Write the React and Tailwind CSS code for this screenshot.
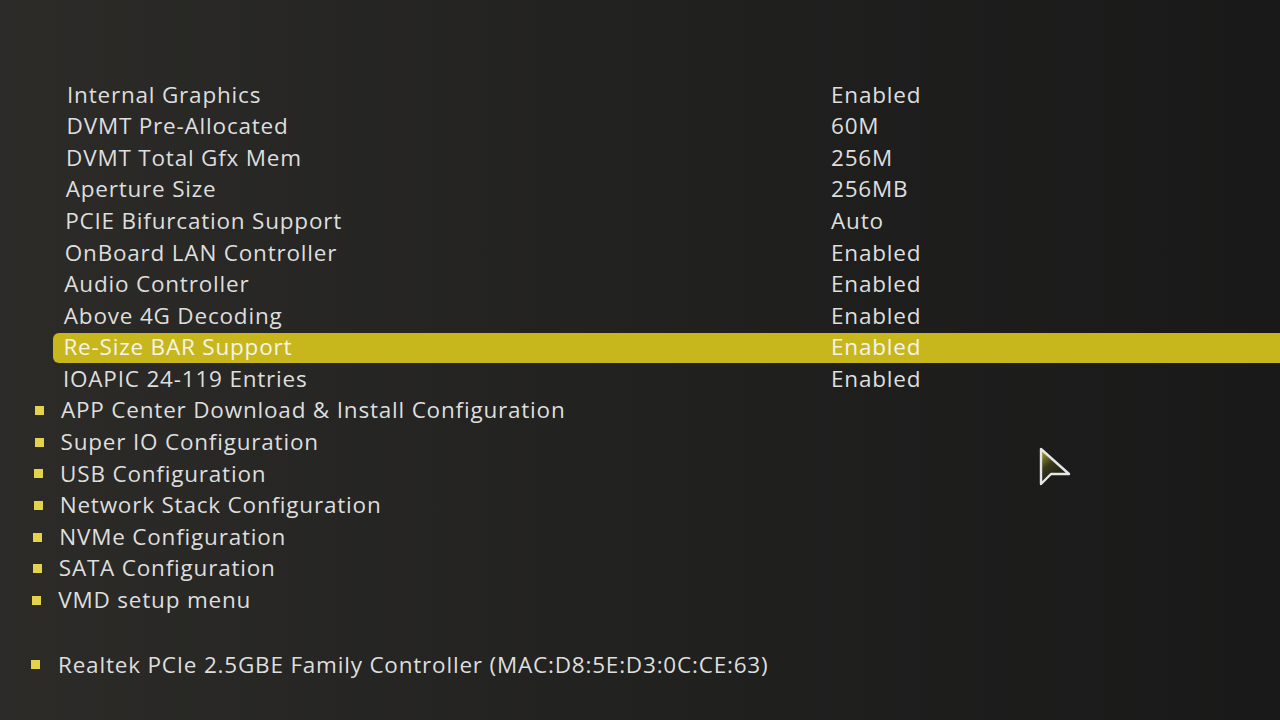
import React from "react";

const settings = [
  ["Internal Graphics", "Enabled"],
  ["DVMT Pre-Allocated", "60M"],
  ["DVMT Total Gfx Mem", "256M"],
  ["Aperture Size", "256MB"],
  ["PCIE Bifurcation Support", "Auto"],
  ["OnBoard LAN Controller", "Enabled"],
  ["Audio Controller", "Enabled"],
  ["Above 4G Decoding", "Enabled"],
  ["Re-Size BAR Support", "Enabled", true],
  ["IOAPIC 24-119 Entries", "Enabled"],
];

const menus = [
  "APP Center Download & Install Configuration",
  "Super IO Configuration",
  "USB Configuration",
  "Network Stack Configuration",
  "NVMe Configuration",
  "SATA Configuration",
  "VMD setup menu",
];

function Bullet() {
  return <span className="w-[9px] h-[9px] bg-[#e3d24a] shrink-0" />;
}

function Cursor() {
  return (
    <svg className="absolute left-[1038px] top-[446px]" width="36" height="44" viewBox="0 0 36 44">
      <defs>
        <linearGradient id="cg" x1="0" y1="0" x2="0.6" y2="1">
          <stop offset="0" stopColor="#b8b23a" />
          <stop offset="0.45" stopColor="#3a3a1c" />
          <stop offset="1" stopColor="#151515" />
        </linearGradient>
      </defs>
      <path d="M3 3 L3 38 L13 28 L31 28 Z" fill="url(#cg)" stroke="#e6e6e6" strokeWidth="2.4" strokeLinejoin="round" />
    </svg>
  );
}

export default function App() {
  return (
    <div
      className="relative w-[1280px] h-[720px] overflow-hidden bg-gradient-to-r from-[#2c2b28] via-[#212120] to-[#191919] text-[#dedede] text-[22.5px] tracking-[0.8px]"
      style={{ fontFamily: '"Open Sans", "Noto Sans", sans-serif' }}
    >
      <div className="pt-[79px] flex flex-col">
        {settings.map(([label, value, sel], i) => (
          <div key={i} className="h-[31.6px] flex items-center pl-[53px]">
            <div
              className={
                "flex-1 h-[30px] flex items-center rounded-l-[6px] " +
                (sel ? "bg-[#c8b71c] text-[#f4f4ee]" : "")
              }
            >
              <span className="w-[778px] shrink-0 leading-none" style={{ paddingLeft: 14 - i * 0.45 }}>
                {label}
              </span>
              <span className="leading-none">{value}</span>
            </div>
          </div>
        ))}
        {menus.map((m, i) => (
          <div key={i} className="h-[31.6px] flex items-center gap-[17px]" style={{ paddingLeft: 35 - i * 0.45 }}>
            <Bullet />
            <span className="leading-none">{m}</span>
          </div>
        ))}
        <div className="h-[33px]" />
        <div className="h-[31.6px] flex items-center pl-[31px] gap-[18px]">
          <Bullet />
          <span className="leading-none">Realtek PCIe 2.5GBE Family Controller (MAC:D8:5E:D3:0C:CE:63)</span>
        </div>
      </div>
      <Cursor />
    </div>
  );
}
